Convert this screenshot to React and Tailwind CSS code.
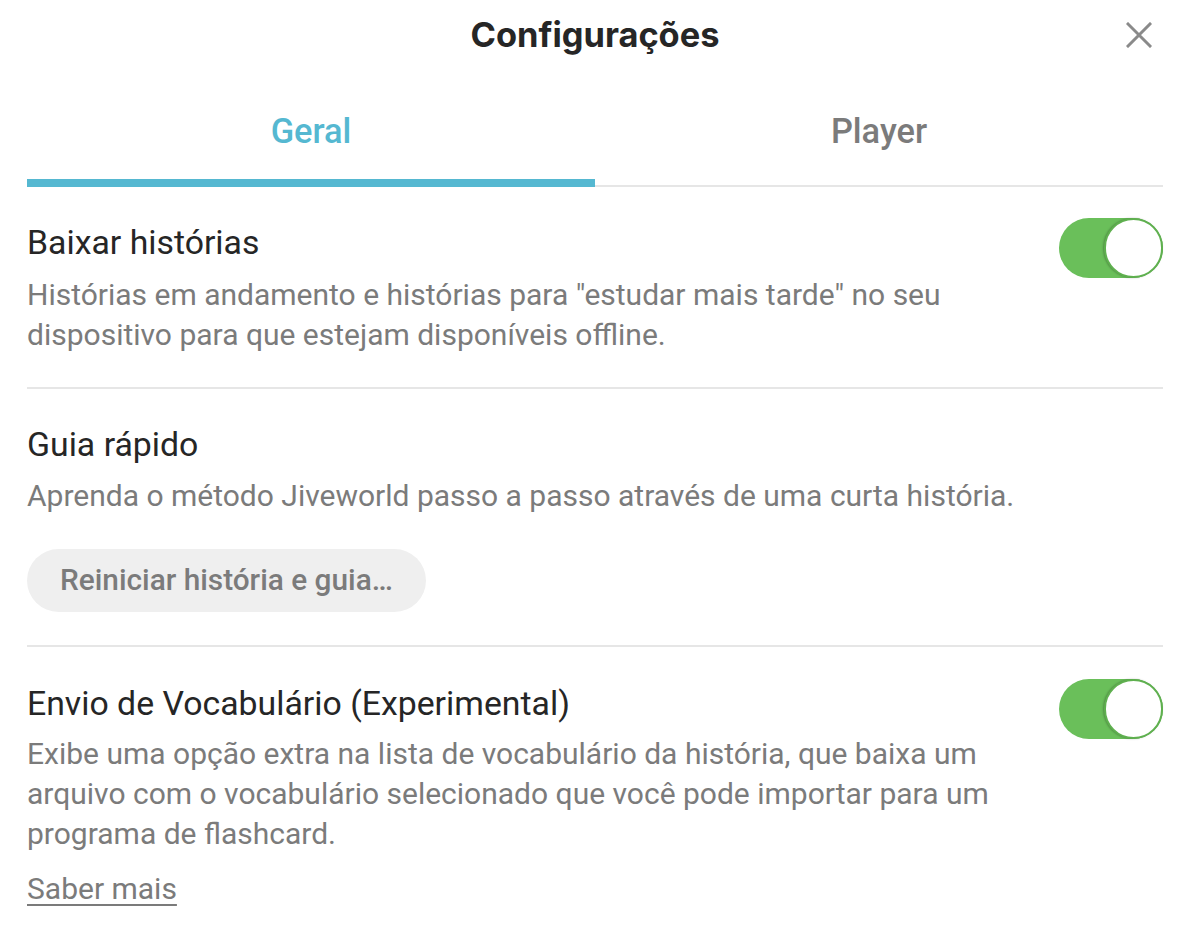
import React from "react";

function Toggle() {
  return (
    <div className="relative w-[104px] h-[60px] rounded-full bg-[#6abf5a] shrink-0">
      <div className="absolute right-0 top-0 w-[59px] h-[60px] rounded-full bg-white border-2 border-[#5fb04f] shadow-[-1px_0_2px_rgba(0,0,0,0.25)]" />
    </div>
  );
}

export default function App() {
  return (
    <div className="w-[1188px] h-[951px] bg-white" style={{ fontFamily: "Roboto, 'Noto Sans', sans-serif" }}>
      <div className="pl-[27px] pr-[25px]">
        <div className="relative h-[70px] flex items-center justify-center">
          <h1 className="text-[34.4px] leading-[40px] font-bold text-[#262626]" style={{ fontFamily: "Inter, 'Noto Sans', sans-serif" }}>
            Configurações
          </h1>
          <button className="absolute right-[11px] top-[22px] w-[26px] h-[26px] flex items-center justify-center">
            <svg width="26" height="26" viewBox="0 0 26 26" fill="none" stroke="#8a8a8a" strokeWidth="3" strokeLinecap="square">
              <path d="M2 2 L24 24 M24 2 L2 24" />
            </svg>
          </button>
        </div>

        <div className="flex mt-[41px] border-b-2 border-[#e6e6e6]">
          <div className="flex-1 flex flex-col items-center">
            <span className="text-[34.4px] font-medium text-[#55b8d1] leading-[40px]">Geral</span>
            <div className="w-full h-[8px] bg-[#55b8d1] mt-[28px] -mb-[2px]" />
          </div>
          <div className="flex-1 flex flex-col items-center">
            <span className="text-[34.4px] font-medium text-[#7b7b7b] leading-[40px]">Player</span>
          </div>
        </div>

        <div className="flex items-start justify-between pt-[36px] pb-[32px] border-b-2 border-[#e6e6e6]">
          <div className="w-[1010px]">
            <div className="text-[33.8px] text-[#262626] leading-[40px]">Baixar histórias</div>
            <div className="text-[30px] text-[#7b7b7b] leading-[40px] mt-[12px]">
              Histórias em andamento e histórias para "estudar mais tarde" no seu dispositivo para que estejam disponíveis offline.
            </div>
          </div>
          <div className="-mt-[5px]">
            <Toggle />
          </div>
        </div>

        <div className="pt-[36px] pb-[33px] border-b-2 border-[#e6e6e6]">
          <div className="text-[33.8px] text-[#262626] leading-[40px]">Guia rápido</div>
          <div className="text-[30px] text-[#7b7b7b] leading-[40px] mt-[11px]">
            Aprenda o método Jiveworld passo a passo através de uma curta história.
          </div>
          <button className="mt-[33px] h-[63px] px-[33px] rounded-full bg-[#efefef] text-[29.8px] font-medium text-[#7b7b7b]">
            Reiniciar história e guia…
          </button>
        </div>

        <div className="flex items-start justify-between pt-[37px]">
          <div className="w-[1010px]">
            <div className="text-[33.8px] text-[#262626] leading-[40px]">Envio de Vocabulário (Experimental)</div>
            <div className="text-[30px] text-[#7b7b7b] leading-[40px] mt-[10px]">
              Exibe uma opção extra na lista de vocabulário da história, que baixa um arquivo com o vocabulário selecionado que você pode importar para um programa de flashcard.
            </div>
            <div className="mt-[15px] text-[30px] text-[#7b7b7b] leading-[40px] underline underline-offset-[5px] decoration-[2px]">Saber mais</div>
          </div>
          <div className="-mt-[5px]">
            <Toggle />
          </div>
        </div>
      </div>
    </div>
  );
}
